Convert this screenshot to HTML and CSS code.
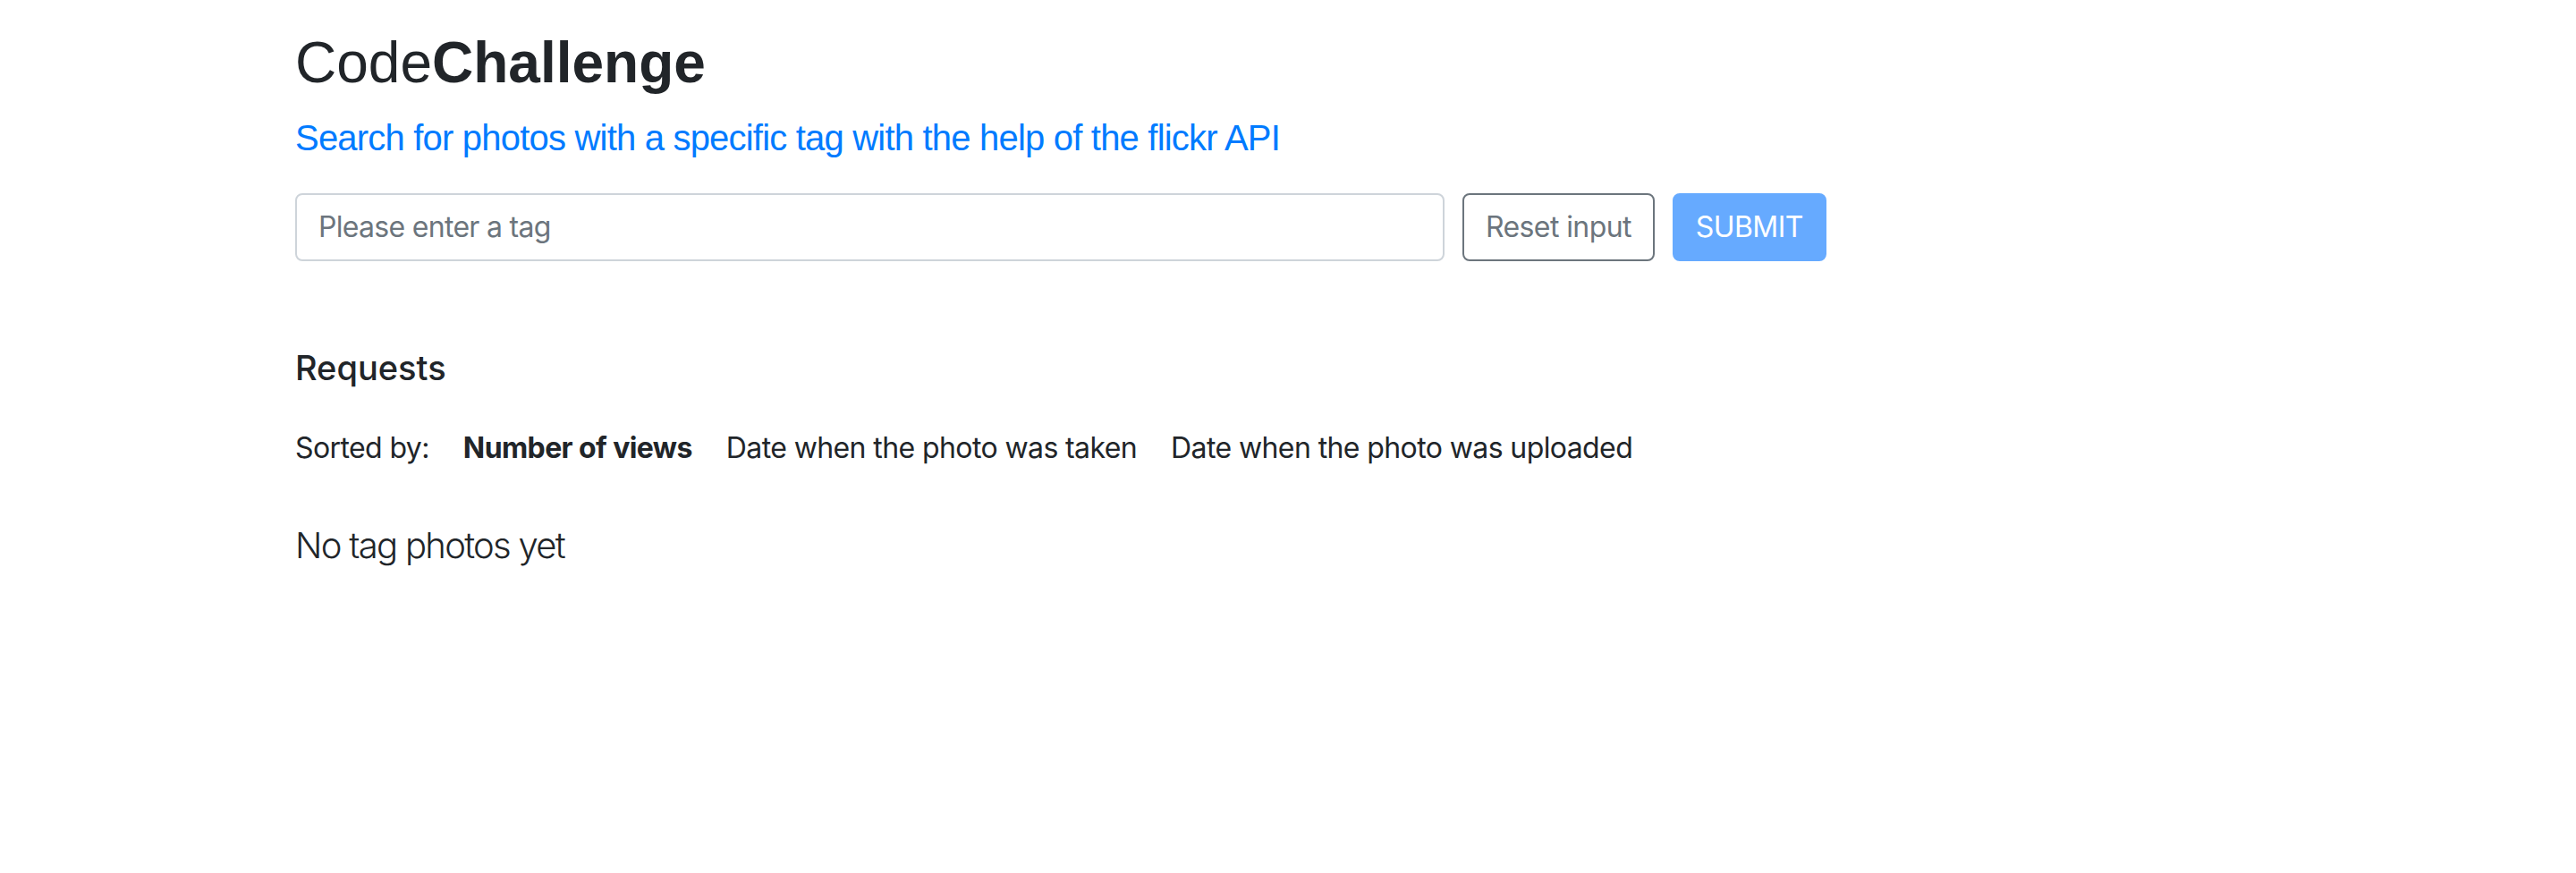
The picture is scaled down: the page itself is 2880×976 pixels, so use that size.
FILE: index.html
```html
<!DOCTYPE html>
<html lang="en">
<head>
<meta charset="utf-8">
<title>CodeChallenge</title>
<link rel="stylesheet" href="styles.css">
</head>
<body>
<div class="container">
  <header class="header">
    <h1 class="title">Code<b>Challenge</b></h1>
    <p class="subtitle">Search for photos with a specific tag with the help of the flickr API</p>
  </header>
  <form class="search">
    <input class="search-input" type="text" placeholder="Please enter a tag">
    <button class="btn btn-reset" type="button">Reset input</button>
    <button class="btn btn-submit" type="submit" disabled>SUBMIT</button>
  </form>
  <section class="requests">
    <h2 class="requests-title">Requests</h2>
    <div class="sort">
      <span class="sort-label">Sorted by:</span>
      <span class="sort-item active">Number of views</span>
      <span class="sort-item">Date when the photo was taken</span>
      <span class="sort-item">Date when the photo was uploaded</span>
    </div>
    <p class="empty">No tag photos yet</p>
  </section>
</div>
</body>
</html>
```

FILE: styles.css
```css
* { box-sizing: border-box; }
html, body { margin: 0; padding: 0; background: #fff; }
body {
  font-family: Inter, "Liberation Sans", Arial, sans-serif;
  font-size: 32px;
  line-height: 1.5;
  color: #212529;
}
.container {
  max-width: 2280px;
  margin: 0 auto;
  padding: 32px 30px 0;
}
.title {
  margin: 0 0 15px;
  font-family: "Liberation Sans", Arial, sans-serif;
  font-size: 64px;
  font-weight: 400;
  line-height: 1.2;
}
.title b { font-weight: 700; }
.subtitle {
  margin: 0 0 32px;
  font-family: "Liberation Sans", Arial, sans-serif;
  font-size: 40px;
  line-height: 1.5;
  letter-spacing: -0.8px;
  color: #007bff;
}
.search {
  display: flex;
  align-items: stretch;
  gap: 20px;
  margin: 0;
}
.search-input {
  width: 1285px;
  height: 76px;
  padding: 0 24px;
  border: 2px solid #ced4da;
  border-radius: 8px;
  font-family: inherit;
  font-size: 32px;
  letter-spacing: -0.7px;
  color: #495057;
  background: #fff;
  outline: none;
}
.search-input::placeholder { color: #6c757d; opacity: 1; }
.btn {
  height: 76px;
  padding: 0 24px;
  border-radius: 8px;
  font-family: inherit;
  font-size: 32px;
  line-height: 1.5;
  letter-spacing: -0.6px;
  background: #fff;
}
.btn-reset {
  border: 2px solid #6c757d;
  color: #6c757d;
}
.btn-submit {
  border: 2px solid #66aaff;
  background: #66aaff;
  color: #fff;
}
.requests { padding-top: 97px; }
.requests-title {
  margin: 0 0 43px;
  font-size: 38px;
  font-weight: 500;
  line-height: 1.2;
}
.sort {
  display: flex;
  gap: 38px;
  font-size: 32px;
  line-height: 1.5;
  letter-spacing: -0.6px;
}
.sort-item.active { font-weight: 700; }
.empty {
  margin: 55px 0 0;
  font-size: 40px;
  font-weight: 300;
  line-height: 1.5;
  letter-spacing: -1.7px;
}
```
